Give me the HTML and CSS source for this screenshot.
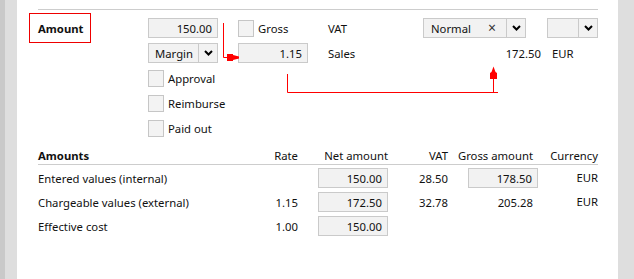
FILE: index.html
```html
<!DOCTYPE html>
<html lang="en">
<head>
  <meta charset="UTF-8">
  <title>Amount</title>
  <link rel="stylesheet" href="styles.css">
</head>
<body>
  <div class="window">
    <!-- left rail -->
    <div class="rail"></div>

    <main class="panel">
      <!-- Amount entry -->
      <section class="amount-form">
        <div class="label-box">Amount</div>

        <div class="field num c2 r1">150.00</div>
        <label class="check c3 r1"><span class="box"></span>Gross</label>
        <div class="text c4 r1">VAT</div>
        <div class="select c5 r1">
          <span class="value">Normal</span>
          <span class="clear">×</span>
          <span class="drop"><svg width="9" height="6" viewBox="0 0 9 6"><polyline points="1,1 4.5,4.5 8,1" fill="none" stroke="#000" stroke-width="2"/></svg></span>
        </div>
        <div class="select c6 r1">
          <span class="value"></span>
          <span class="drop"><svg width="9" height="6" viewBox="0 0 9 6"><polyline points="1,1 4.5,4.5 8,1" fill="none" stroke="#000" stroke-width="2"/></svg></span>
        </div>

        <div class="select c2 r2">
          <span class="value">Margin</span>
          <span class="drop"><svg width="9" height="6" viewBox="0 0 9 6"><polyline points="1,1 4.5,4.5 8,1" fill="none" stroke="#000" stroke-width="2"/></svg></span>
        </div>
        <div class="field num c3 r2">1.15</div>
        <div class="text c4 r2">Sales</div>
        <div class="text right c5 r2">172.50</div>
        <div class="text cur c6 r2">EUR</div>

        <label class="check c2 r3"><span class="box"></span>Approval</label>
        <label class="check c2 r4"><span class="box"></span>Reimburse</label>
        <label class="check c2 r5"><span class="box"></span>Paid out</label>
      </section>

      <!-- Amounts table -->
      <section class="amounts">
        <div class="head">
          <div class="name bold">Amounts</div>
          <div class="rate">Rate</div>
          <div class="net">Net amount</div>
          <div class="vat">VAT</div>
          <div class="gross">Gross amount</div>
          <div class="cur">Currency</div>
        </div>
        <div class="row">
          <div class="name">Entered values (internal)</div>
          <div class="rate"></div>
          <div class="net"><span class="field num">150.00</span></div>
          <div class="vat">28.50</div>
          <div class="gross"><span class="field num">178.50</span></div>
          <div class="cur top">EUR</div>
        </div>
        <div class="row">
          <div class="name">Chargeable values (external)</div>
          <div class="rate">1.15</div>
          <div class="net"><span class="field num">172.50</span></div>
          <div class="vat">32.78</div>
          <div class="gross pad">205.28</div>
          <div class="cur top">EUR</div>
        </div>
        <div class="row">
          <div class="name">Effective cost</div>
          <div class="rate">1.00</div>
          <div class="net"><span class="field num">150.00</span></div>
          <div class="vat"></div>
          <div class="gross"></div>
          <div class="cur"></div>
        </div>
      </section>
    </main>

    <div class="scroll"></div>

    <!-- red calculation arrows drawn over the form -->
    <svg class="flow" width="634" height="279" viewBox="0 0 634 279">
      <polyline points="223.5,23 223.5,57.5 228,57.5" fill="none" stroke="#f00" stroke-width="1"/>
      <polygon points="227,54 233,54 233,55 239,56.5 239,58.5 233,60 233,61 227,61" fill="#f00"/>
      <polyline points="287.5,74 287.5,92.5 498,92.5" fill="none" stroke="#f00" stroke-width="1"/>
      <line x1="493.5" y1="92" x2="493.5" y2="78" stroke="#f00" stroke-width="1"/>
      <polygon points="493.5,66.5 495.5,72 497,73 497,79 490,79 490,73 491.5,72" fill="#f00"/>
    </svg>
  </div>
</body>
</html>
```

FILE: styles.css
```css
/* general page */
body {
  margin: 0;
  font-family: "Noto Sans", "Open Sans", sans-serif;
  font-size: 11.3px;
  color: #111;
  background: #fff;
}

.window {
  position: relative;
  display: flex;
  width: 634px;
  height: 279px;
  overflow: hidden;
}

/* left rail and right scroll area */
.rail {
  width: 12px;
  border-left: 5px solid #c9c9c9;
  background: #dedede;
}

.scroll {
  width: 16px;
  background: #dedede;
}

.panel {
  flex: 1;
  padding: 9px 20px 0 21px;
}

/* top block */
.amount-form {
  display: grid;
  grid-template-columns: 110px 90px 90px 95px 124px 51px;
  grid-template-rows: repeat(5, 20px);
  row-gap: 5px;
  border-top: 1px solid #cdcdcd;
  padding-top: 8px;
}

.c2 { grid-column: 2; }
.c3 { grid-column: 3; }
.c4 { grid-column: 4; }
.c5 { grid-column: 5; }
.c6 { grid-column: 6; }
.r1 { grid-row: 1; }
.r2 { grid-row: 2; }
.r3 { grid-row: 3; }
.r4 { grid-row: 4; }
.r5 { grid-row: 5; }

.label-box {
  grid-column: 1;
  grid-row: 1;
  align-self: start;
  width: 62px;
  height: 30px;
  margin: -5px 0 0 -9px;
  padding-left: 8px;
  box-sizing: border-box;
  border: 1px solid #e00;
  font-weight: bold;
  line-height: 29px;
}

.field {
  display: block;
  width: 70px;
  height: 20px;
  box-sizing: border-box;
  border: 1px solid #cacaca;
  background: #f2f2f2;
  line-height: 19px;
  padding: 0 5px;
}

.num {
  text-align: right;
}

.text {
  line-height: 21px;
}

.right {
  text-align: right;
  padding-right: 6px;
}

.cur {
  padding-left: 5px;
}

/* select boxes */
.select {
  display: flex;
  height: 20px;
  box-sizing: border-box;
  border: 1px solid #cacaca;
  background: #f2f2f2;
  line-height: 19px;
}

.select.c2 { width: 70px; }
.select.c5 { width: 103px; }
.select.c6 { width: 51px; }

.select .value {
  flex: 1;
  padding-left: 6px;
}

.select.c5 .value {
  padding-left: 7px;
}

.select .clear {
  width: 18px;
  color: #333;
  font-size: 14px;
  line-height: 18px;
}

.select .drop {
  display: flex;
  align-items: center;
  justify-content: center;
  width: 18px;
  border-left: 1px solid #cacaca;
}

/* checkboxes */
.check {
  display: flex;
  align-items: center;
  gap: 4px;
  line-height: 21px;
  white-space: nowrap;
}

.check .box {
  width: 16px;
  height: 17px;
  box-sizing: border-box;
  border: 1px solid #c6c6c6;
  background: #f3f3f3;
}

/* bottom table */
.amounts {
  margin-top: 8px;
}

.head,
.row {
  display: grid;
  grid-template-columns: 200px 60px 90px 60px 90px 60px;
}

.head {
  height: 18px;
  line-height: 19px;
  border-bottom: 1px solid #cdcdcd;
  margin-bottom: 3px;
}

.row {
  height: 20px;
  line-height: 21px;
  margin-bottom: 4px;
}

.bold {
  font-weight: bold;
}

.rate,
.net,
.vat,
.gross,
.head .cur,
.row .cur {
  text-align: right;
  padding-left: 0;
}

.net .field,
.gross .field {
  margin-left: auto;
  line-height: 19px;
}

.head .gross,
.gross.pad {
  padding-right: 5px;
}

.row .cur.top {
  line-height: 19px;
}

/* arrows overlay */
.flow {
  position: absolute;
  left: 0;
  top: 0;
  pointer-events: none;
}
```
